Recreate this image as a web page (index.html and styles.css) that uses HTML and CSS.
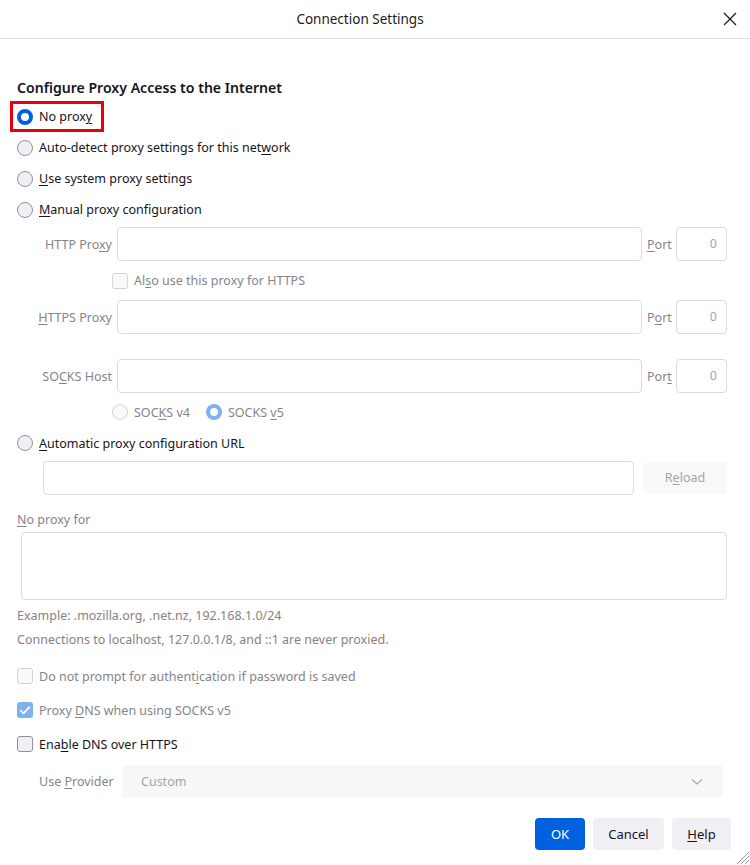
FILE: index.html
```html
<!DOCTYPE html>
<html>
<head>
<meta charset="utf-8">
<link rel="stylesheet" href="styles.css">
</head>
<body>
<div class="dialog">
  <header class="titlebar">
    <div class="title">Connection Settings</div>
    <button class="close" aria-label="Close">
      <svg width="14" height="14" viewBox="0 0 14 14"><path d="M1 1L13 13M13 1L1 13" stroke="#1a1a1a" stroke-width="1.2" fill="none"/></svg>
    </button>
  </header>

  <main class="content">
    <h1 class="heading">Configure Proxy Access to the Internet</h1>

    <div class="radio-row first">
      <div class="highlight">
        <span class="radio checked"></span>
        <span class="label">No prox<u>y</u></span>
      </div>
    </div>
    <div class="radio-row">
      <span class="radio"></span>
      <span class="label">Auto-detect proxy settings for this net<u>w</u>ork</span>
    </div>
    <div class="radio-row">
      <span class="radio"></span>
      <span class="label"><u>U</u>se system proxy settings</span>
    </div>
    <div class="radio-row">
      <span class="radio"></span>
      <span class="label"><u>M</u>anual proxy configuration</span>
    </div>

    <div class="proxy-row first-proxy">
      <span class="plabel">HTTP Pro<u>x</u>y</span>
      <span class="input host"></span>
      <span class="port-label"><u>P</u>ort</span>
      <span class="input port">0</span>
    </div>
    <div class="check-sub">
      <span class="checkbox disabled"></span>
      <span class="dlabel">Al<u>s</u>o use this proxy for HTTPS</span>
    </div>
    <div class="proxy-row">
      <span class="plabel"><u>H</u>TTPS Proxy</span>
      <span class="input host"></span>
      <span class="port-label">P<u>o</u>rt</span>
      <span class="input port">0</span>
    </div>
    <div class="proxy-row socks">
      <span class="plabel">SO<u>C</u>KS Host</span>
      <span class="input host"></span>
      <span class="port-label">Por<u>t</u></span>
      <span class="input port">0</span>
    </div>
    <div class="socks-versions">
      <span class="radio disabled"></span>
      <span class="dlabel v4">SOC<u>K</u>S v4</span>
      <span class="radio checked disabled"></span>
      <span class="dlabel">SOCKS <u>v</u>5</span>
    </div>

    <div class="radio-row auto">
      <span class="radio"></span>
      <span class="label"><u>A</u>utomatic proxy configuration URL</span>
    </div>
    <div class="url-row">
      <span class="input url"></span>
      <span class="reload">R<u>e</u>load</span>
    </div>

    <div class="noproxy-label"><u>N</u>o proxy for</div>
    <div class="textarea"></div>
    <div class="hint first-hint">Example: .mozilla.org, .net.nz, 192.168.1.0/24</div>
    <div class="hint">Connections to localhost, 127.0.0.1/8, and ::1 are never proxied.</div>

    <div class="check-row first-check">
      <span class="checkbox disabled"></span>
      <span class="dlabel">Do not prompt for authent<u>i</u>cation if password is saved</span>
    </div>
    <div class="check-row">
      <span class="checkbox checked-disabled">
        <svg width="16" height="16" viewBox="0 0 16 16"><path d="M3.2 8.2L6.6 11.4L12.8 4.6" stroke="#fff" stroke-width="1.6" fill="none"/></svg>
      </span>
      <span class="dlabel">Proxy <u>D</u>NS when using SOCKS v5</span>
    </div>
    <div class="check-row">
      <span class="checkbox"></span>
      <span class="label">Ena<u>b</u>le DNS over HTTPS</span>
    </div>

    <div class="provider-row">
      <span class="dlabel provider-label">Use <u>P</u>rovider</span>
      <div class="select">
        <span>Custom</span>
        <svg width="12" height="8" viewBox="0 0 12 8"><path d="M1 1.5L6 6L11 1.5" stroke="#a9a9ae" stroke-width="1.2" fill="none"/></svg>
      </div>
    </div>

    <div class="buttons">
      <button class="btn primary">OK</button>
      <button class="btn">Cancel</button>
      <button class="btn"><u>H</u>elp</button>
    </div>
  </main>

  <svg class="grip" width="16" height="16" viewBox="0 0 16 16">
    <path d="M15 3L3 15M15 7L7 15M15 11L11 15" stroke="#9a9a9a" stroke-width="1" fill="none"/>
  </svg>
</div>
</body>
</html>
```

FILE: styles.css
```css
* { box-sizing: border-box; }

html, body {
  margin: 0;
  padding: 0;
  background: #ffffff;
}

body {
  font-family: "Noto Sans", "Open Sans", sans-serif;
  font-size: 12.5px;
  color: #15141a;
}

u {
  text-decoration: underline;
  text-underline-offset: 2px;
  text-decoration-thickness: 1px;
}

.dialog {
  position: relative;
  width: 750px;
  height: 865px;
  overflow: hidden;
}

.titlebar {
  display: flex;
  align-items: center;
  height: 39px;
  border-bottom: 1px solid #dcdcdc;
}

.title {
  flex: 1;
  text-align: center;
  padding-left: 5px;
  font-size: 13.5px;
  color: #1a1a1a;
}

.close {
  width: 30px;
  height: 30px;
  margin-right: 5px;
  border: none;
  background: transparent;
  display: flex;
  align-items: center;
  justify-content: center;
  padding: 0;
}

.content {
  padding-left: 17px;
  display: flex;
  flex-direction: column;
}

.heading {
  margin: 38px 0 0 0;
  height: 21px;
  line-height: 21px;
  font-size: 14.1px;
  font-weight: 600;
  color: #15141a;
}

.radio-row {
  display: flex;
  align-items: center;
  height: 31px;
  gap: 6px;
}

.radio-row.first {
  margin-top: 3px;
  margin-left: -7px;
}

.highlight {
  display: flex;
  align-items: center;
  gap: 6px;
  height: 31px;
  padding: 0 9px 0 4px;
  border: 3px solid #e8000c;
}

.radio {
  width: 16px;
  height: 16px;
  border-radius: 50%;
  border: 1px solid #8f8f9d;
  background: #f0f0f4;
  flex: none;
}

.radio.checked {
  border: 4px solid #0061e0;
  background: #ffffff;
}

.radio.disabled {
  border-color: #d2d2d8;
  background: #f9f9fb;
}

.radio.checked.disabled {
  border: 4px solid #80b0ef;
  background: #ffffff;
}

.label {
  color: #15141a;
  white-space: nowrap;
}

.dlabel {
  color: #85848a;
  white-space: nowrap;
}

.proxy-row {
  display: flex;
  align-items: center;
  gap: 5px;
  height: 34px;
  width: 710px;
}

.proxy-row.first-proxy { margin-top: 2px; }
.proxy-row.socks { margin-top: 25px; }

.plabel {
  width: 95px;
  text-align: right;
  color: #85848a;
  white-space: nowrap;
}

.port-label {
  width: 24px;
  color: #85848a;
}

.input {
  height: 34px;
  border: 1px solid #dcdce0;
  border-radius: 4px;
  background: #ffffff;
}

.input.host { flex: 1; }

.input.port {
  width: 51px;
  text-align: right;
  padding-right: 9px;
  line-height: 32px;
  color: #a4a4a9;
}

.check-sub {
  display: flex;
  align-items: center;
  gap: 6px;
  height: 39px;
  padding-left: 95px;
}

.checkbox {
  width: 16px;
  height: 16px;
  border-radius: 3px;
  border: 1px solid #8f8f9d;
  background: #f0f0f4;
  flex: none;
  display: flex;
}

.checkbox.disabled {
  border-color: #d2d2d8;
  background: #f9f9fb;
}

.checkbox.checked-disabled {
  border: none;
  background: #80b0ef;
}

.socks-versions {
  display: flex;
  align-items: center;
  height: 38px;
  gap: 6px;
  padding-left: 95px;
}

.dlabel.v4 { margin-right: 10px; }

.radio-row.auto { height: 24px; }

.url-row {
  display: flex;
  align-items: center;
  gap: 9px;
  margin-top: 6px;
  margin-left: 26px;
  width: 684px;
}

.input.url { flex: 1; }

.reload {
  width: 84px;
  height: 32px;
  line-height: 32px;
  text-align: center;
  border-radius: 4px;
  background: #f9f9fa;
  color: #a3a3a8;
}

.noproxy-label {
  margin-top: 15px;
  height: 20px;
  line-height: 20px;
  color: #85848a;
}

.textarea {
  margin-top: 2px;
  margin-left: 4px;
  width: 706px;
  height: 68px;
  border: 1px solid #dcdce0;
  border-radius: 4px;
}

.hint {
  height: 20px;
  line-height: 20px;
  color: #8a7f80;
  font-size: 12.5px;
}

.hint.first-hint { margin-top: 6px; }
.hint + .hint { margin-top: 4px; }

.check-row {
  display: flex;
  align-items: center;
  gap: 6px;
  height: 34px;
}

.check-row.first-check { margin-top: 9px; }

.provider-row {
  display: flex;
  align-items: center;
  margin-top: 4px;
  height: 33px;
  padding-left: 22px;
}

.provider-label { width: 83px; }

.select {
  width: 601px;
  height: 33px;
  border-radius: 4px;
  background: #f7f7f8;
  display: flex;
  align-items: center;
  justify-content: space-between;
  padding: 0 20px 0 19px;
  color: #a3a3a8;
}

.buttons {
  display: flex;
  justify-content: flex-end;
  gap: 8px;
  margin-top: 20px;
  width: 714px;
}

.btn {
  height: 32px;
  border: none;
  border-radius: 4px;
  background: #f0f0f4;
  font-family: inherit;
  font-size: 13px;
  color: #15141a;
  padding: 0;
}

.btn.primary {
  width: 50px;
  background: #0061e0;
  color: #ffffff;
}

.btn:nth-child(2) { width: 71px; }
.btn:nth-child(3) { width: 59px; }

.grip {
  position: absolute;
  right: 0;
  bottom: 0;
}
```
